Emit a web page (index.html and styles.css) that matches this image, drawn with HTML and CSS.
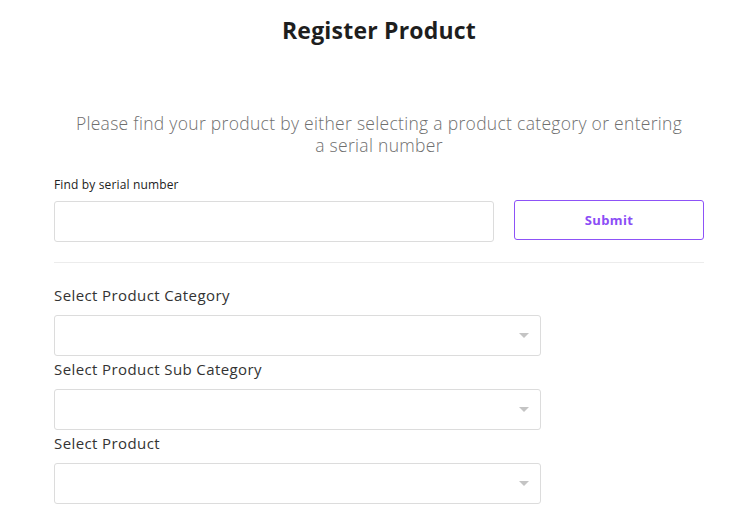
FILE: index.html
```html
<!DOCTYPE html>
<html lang="en">
<head>
<meta charset="utf-8">
<title>Register Product</title>
<link rel="stylesheet" href="styles.css">
</head>
<body>
<main class="page">
  <h1 class="title">Register Product</h1>
  <p class="intro">Please find your product by either selecting a product category or entering a serial number</p>
  <section class="serial">
    <label class="small-label" for="serial">Find by serial number</label>
    <div class="serial-row">
      <input class="text-input" id="serial" type="text">
      <button class="submit" type="button">Submit</button>
    </div>
  </section>
  <hr class="divider">
  <section class="selects">
    <label class="field-label">Select Product Category</label>
    <div class="select"><span class="arrow"></span></div>
    <label class="field-label">Select Product Sub Category</label>
    <div class="select"><span class="arrow"></span></div>
    <label class="field-label">Select Product</label>
    <div class="select"><span class="arrow"></span></div>
  </section>
</main>
</body>
</html>
```
FILE: styles.css
```css
* { box-sizing: border-box; }
html, body { margin: 0; background: #fff; }
body { font-family: "Open Sans", "Lato", sans-serif; color: #222; }
.page { width: 650px; margin-left: 54px; padding-top: 16px; }
.title {
  margin: 0; text-align: center; font-size: 23px; line-height: 28px;
  font-weight: 700; color: #1e1e1e; letter-spacing: 0.2px;
}
.intro {
  margin: 68px auto 0; max-width: 610px; text-align: center;
  font-size: 17.5px; line-height: 22px; font-weight: 300; color: #6f6f6f;
  letter-spacing: 0.3px;
}
.serial { margin-top: 21px; display: flex; flex-direction: column; }
.small-label { font-size: 12px; line-height: 16px; color: #222; letter-spacing: 0.15px; }
.serial-row { margin-top: 8px; display: flex; gap: 20px; align-items: flex-start; }
.text-input {
  width: 440px; height: 41px; border: 1px solid #dcdcdc; border-radius: 3px;
  font: inherit; padding: 0 10px; outline: none;
}
.submit {
  width: 190px; height: 40px; margin-top: -1px; border: 1px solid #8d52f7; border-radius: 3px;
  background: #fff; color: #8b4df6; font-family: inherit; font-weight: 700; font-size: 13px;
  letter-spacing: 0.4px;
}
.divider { margin: 20px 0 0; border: 0; border-top: 1px solid #ececec; }
.selects { margin-top: 22px; display: flex; flex-direction: column; }
.field-label { font-size: 15px; line-height: 20px; color: #333; letter-spacing: 0.4px; }
.select {
  width: 487px; height: 41px; margin-top: 10px; margin-bottom: 3px;
  border: 1px solid #dcdcdc; border-radius: 3px;
  display: flex; align-items: center; justify-content: flex-end; padding-right: 11px;
}
.arrow {
  width: 0; height: 0; border-left: 5px solid transparent; border-right: 5px solid transparent;
  border-top: 5px solid #c4c4c4;
}
```
